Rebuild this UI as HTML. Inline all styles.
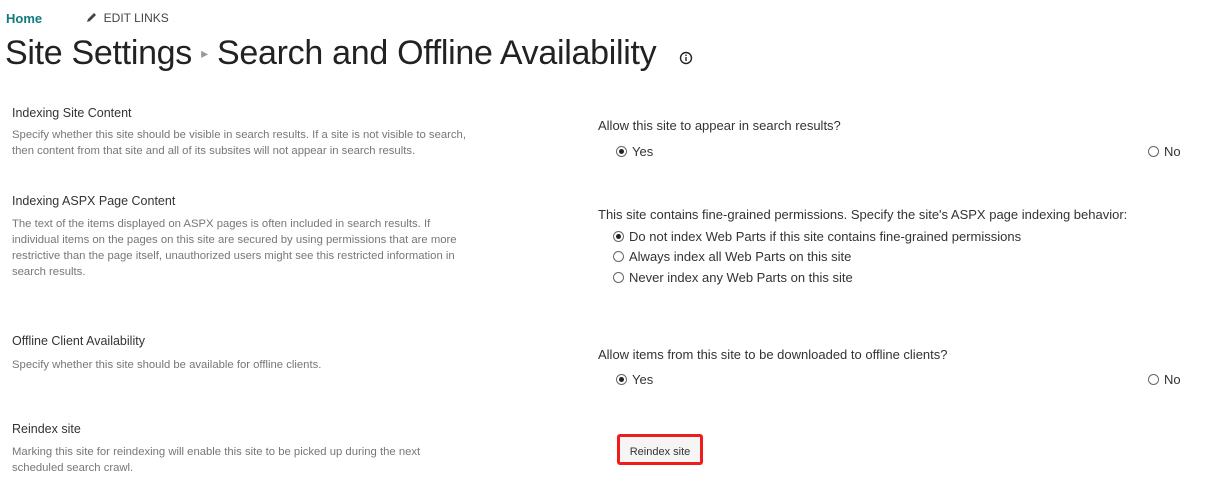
<!DOCTYPE html>
<html><head><meta charset="utf-8"><style>
body{margin:0;width:1225px;height:485px;background:#fff;font-family:"Liberation Sans",sans-serif;position:relative;overflow:hidden;color:#333}
.a{position:absolute;white-space:nowrap}
.h{font-size:12.5px;color:#333}
.d{font-size:11.3px;color:#777;line-height:16px}
.l{font-size:13px;color:#333}
.r{display:inline-block;width:11px;height:11px;border:1px solid #666;border-radius:50%;box-sizing:border-box;position:absolute;left:-16px;top:2px;background:#fff}
.r.on::after{content:"";position:absolute;left:2px;top:2px;width:5px;height:5px;border-radius:50%;background:#222}
</style></head><body>
<div class="a" style="left:6px;top:11px;font-size:13px;color:#0f7b7c;font-weight:bold">Home</div>
<div class="a" style="left:86px;top:11px;font-size:12px;color:#444">
<svg width="11" height="11" viewBox="0 0 11 11" style="vertical-align:-1px"><path d="M1 10 L2 7 L8 1 L10 3 L4 9 Z" fill="#444"/></svg>&nbsp; EDIT LINKS</div>
<div class="a" style="left:5px;top:34px;font-size:34px;color:#222;letter-spacing:-0.3px;font-weight:300">Site Settings <span style="font-size:14px;color:#999;vertical-align:6px">&#9656;</span> Search and Offline Availability</div>
<svg class="a" style="left:679px;top:51px" width="14" height="14" viewBox="0 0 14 14"><circle cx="7" cy="7" r="5.5" fill="none" stroke="#222" stroke-width="1.4"/><rect x="6.3" y="6" width="1.4" height="4" fill="#222"/><rect x="6.3" y="3.6" width="1.4" height="1.4" fill="#222"/></svg>

<div class="a h" style="left:12px;top:106px">Indexing Site Content</div>
<div class="a d" style="left:12px;top:127px">Specify whether this site should be visible in search results. If a site is not visible to search,<br>then content from that site and all of its subsites will not appear in search results.</div>
<div class="a l" style="left:598px;top:118px">Allow this site to appear in search results?</div>
<div class="a l" style="left:632px;top:144px"><span class="r on"></span>Yes</div>
<div class="a l" style="left:1164px;top:144px"><span class="r"></span>No</div>

<div class="a h" style="left:12px;top:194px">Indexing ASPX Page Content</div>
<div class="a d" style="left:12px;top:216px">The text of the items displayed on ASPX pages is often included in search results. If<br>individual items on the pages on this site are secured by using permissions that are more<br>restrictive than the page itself, unauthorized users might see this restricted information in<br>search results.</div>
<div class="a l" style="left:598px;top:207px">This site contains fine-grained permissions. Specify the site's ASPX page indexing behavior:</div>
<div class="a l" style="left:629px;top:229px"><span class="r on"></span>Do not index Web Parts if this site contains fine-grained permissions</div>
<div class="a l" style="left:629px;top:249px"><span class="r"></span>Always index all Web Parts on this site</div>
<div class="a l" style="left:629px;top:270px"><span class="r"></span>Never index any Web Parts on this site</div>

<div class="a h" style="left:12px;top:334px">Offline Client Availability</div>
<div class="a d" style="left:12px;top:357px">Specify whether this site should be available for offline clients.</div>
<div class="a l" style="left:598px;top:347px">Allow items from this site to be downloaded to offline clients?</div>
<div class="a l" style="left:632px;top:372px"><span class="r on"></span>Yes</div>
<div class="a l" style="left:1164px;top:372px"><span class="r"></span>No</div>

<div class="a h" style="left:12px;top:422px">Reindex site</div>
<div class="a d" style="left:12px;top:444px">Marking this site for reindexing will enable this site to be picked up during the next<br>scheduled search crawl.</div>
<div class="a" style="left:617px;top:434px;width:86px;height:31px;border:3px solid #f01c1c;border-radius:3px;box-sizing:border-box;background:#f5f5f5;font-size:11px;color:#333;text-align:center;line-height:30px">Reindex site</div>
</body></html>
